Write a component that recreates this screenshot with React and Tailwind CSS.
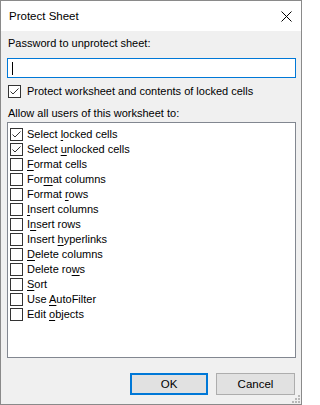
import React from "react";

const items = [
  { pre: "Select ", key: "l", post: "ocked cells", checked: true },
  { pre: "Select ", key: "u", post: "nlocked cells", checked: true },
  { pre: "", key: "F", post: "ormat cells" },
  { pre: "For", key: "m", post: "at columns" },
  { pre: "Format ", key: "r", post: "ows" },
  { pre: "", key: "I", post: "nsert columns" },
  { pre: "I", key: "n", post: "sert rows" },
  { pre: "Insert ", key: "h", post: "yperlinks" },
  { pre: "", key: "D", post: "elete columns" },
  { pre: "Delete ro", key: "w", post: "s" },
  { pre: "", key: "S", post: "ort" },
  { pre: "Use ", key: "A", post: "utoFilter" },
  { pre: "Edit ", key: "o", post: "bjects" },
];

function CheckBox({ checked }) {
  return (
    <div className="w-[13px] h-[13px] border border-[#333333] bg-white flex items-center justify-center shrink-0">
      {checked && (
        <svg width="11" height="11" viewBox="0 0 11 11">
          <path d="M1.5 5.5 L4 8 L9.5 2.5" fill="none" stroke="#333333" strokeWidth="1" />
        </svg>
      )}
    </div>
  );
}

export default function App() {
  return (
    <div
      className="w-[302px] h-[405px] border border-[#8a8a8a] bg-[#f0f0f0] flex flex-col relative text-[11px] leading-[15px] text-black"
      style={{ fontFamily: '"Liberation Sans", Arial, sans-serif' }}
    >
      <div className="h-[30px] bg-white flex items-center justify-between pl-[8px] pr-[9px] shrink-0">
        <span className="text-[11.5px]">Protect Sheet</span>
        <svg width="11" height="11" viewBox="0 0 11 11">
          <path d="M0.5 0.5 L10.5 10.5 M10.5 0.5 L0.5 10.5" stroke="#000" strokeWidth="1" />
        </svg>
      </div>

      <div className="flex flex-col pl-[6px] pr-[5px]">
        <div className="mt-[5px] h-[15px] pl-[1px]">Password to unprotect sheet:</div>
        <div className="mt-[7px] h-[20px] border border-[#0078d7] bg-white flex items-center pl-[4px]">
          <div className="w-[1px] h-[13px] bg-black" />
        </div>

        <div className="mt-[6px] h-[15px] flex items-center pl-[1px] gap-[6px]">
          <CheckBox checked />
          <span>Protect worksheet and contents of locked cells</span>
        </div>

        <div className="mt-[7px] h-[15px] pl-[1px]">Allow all users of this worksheet to:</div>

        <div className="mt-[1px] h-[236px] border border-[#828790] bg-white pt-[4px] pl-[2px] flex flex-col">
          {items.map((it, i) => (
            <div key={i} className="h-[15px] flex items-center gap-[4px]">
              <CheckBox checked={it.checked} />
              <span>
                {it.pre}
                <u className="underline-offset-[2px]">{it.key}</u>
                {it.post}
              </span>
            </div>
          ))}
        </div>

        <div className="mt-[15px] flex justify-end gap-[8px] pr-[1px]">
          <button className="w-[78px] h-[22px] border-2 border-[#0078d7] bg-[#e1e1e1] text-[11.5px]">
            OK
          </button>
          <button className="w-[79px] h-[22px] border border-[#adadad] bg-[#e1e1e1] text-[11.5px]">
            Cancel
          </button>
        </div>
      </div>

      <svg className="absolute right-[1px] bottom-[1px]" width="8" height="8" viewBox="0 0 8 8">
        <rect x="6" y="0" width="2" height="2" fill="#b8b8b8" />
        <rect x="3" y="3" width="2" height="2" fill="#b8b8b8" />
        <rect x="6" y="3" width="2" height="2" fill="#b8b8b8" />
        <rect x="0" y="6" width="2" height="2" fill="#b8b8b8" />
        <rect x="3" y="6" width="2" height="2" fill="#b8b8b8" />
        <rect x="6" y="6" width="2" height="2" fill="#b8b8b8" />
      </svg>
    </div>
  );
}
